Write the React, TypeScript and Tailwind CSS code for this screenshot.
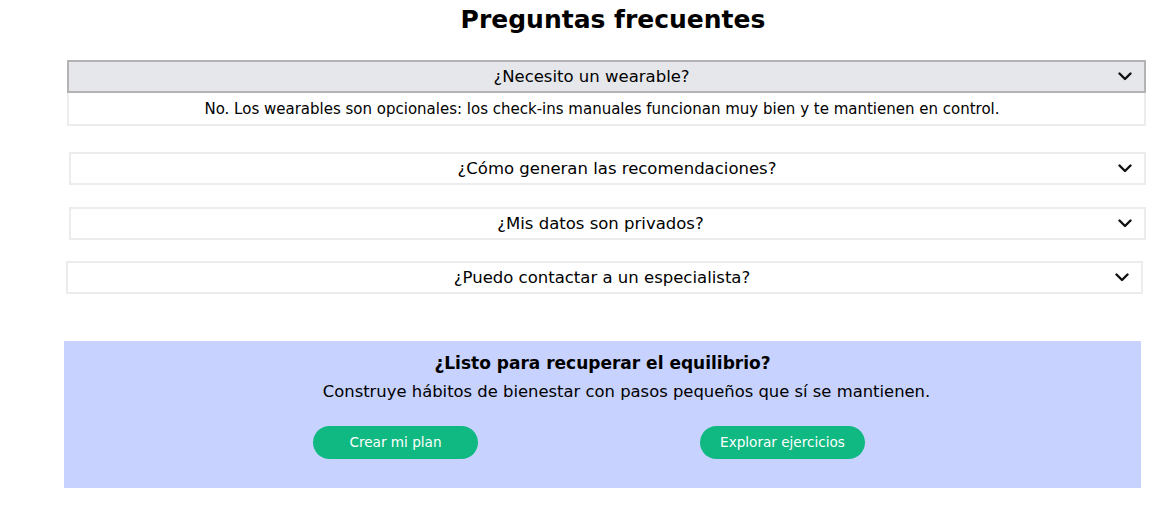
import React from "react";

const faqs = [
  {
    q: "¿Necesito un wearable?",
    a: "No. Los wearables son opcionales: los check-ins manuales funcionan muy bien y te mantienen en control.",
    open: true,
  },
  { q: "¿Cómo generan las recomendaciones?", a: "", open: false },
  { q: "¿Mis datos son privados?", a: "", open: false },
  { q: "¿Puedo contactar a un especialista?", a: "", open: false },
];

const itemSpacing = [
  "mt-[24px] ml-[67px] w-[1079px]",
  "mt-[26px] ml-[69px] w-[1077px]",
  "mt-[22px] ml-[69px] w-[1077px]",
  "mt-[21px] ml-[66px] w-[1077px]",
];

const textShift = ["pl-[4px]", "pl-[53px]", "pl-[20px]", "pl-[29px]"];

const Chevron: React.FC = () => (
  <svg width="14" height="9" viewBox="0 0 14 9" fill="none" className="shrink-0">
    <path d="M1.5 1.5l5.5 5.5 5.5-5.5" stroke="#111" strokeWidth="2.4" strokeLinecap="round" strokeLinejoin="round" />
  </svg>
);

const App: React.FC = () => {
  return (
    <div className="w-[1168px] h-[532px] bg-white text-black font-['DejaVu_Sans',sans-serif] overflow-hidden">
      <h1 className="pt-[3px] pl-[58px] text-center text-[25px] leading-[33px] font-bold">Preguntas frecuentes</h1>

      {faqs.map((f, i) => (
        <div key={f.q} className={itemSpacing[i]}>
          <div
            className={
              f.open
                ? "h-[33px] flex items-center pl-[14px] pr-[12px] bg-[#e5e7eb] border-2 border-[#b3b3b3]"
                : "h-[33px] flex items-center pl-[14px] pr-[12px] bg-white border-2 border-[#ececee]"
            }
          >
            <span className={"flex-1 text-center text-[16.5px] pt-[1px] " + textShift[i]}>{f.q}</span>
            <span className="ml-[22px]">
              <Chevron />
            </span>
          </div>
          {f.open && (
            <div className="h-[33px] flex items-center justify-center pt-[2px] pr-[9px] border-2 border-t-0 border-[#ececee] text-[15px]">
              {f.a}
            </div>
          )}
        </div>
      ))}

      <section className="mt-[47px] ml-[64px] w-[1077px] h-[147px] bg-[#c7d2fe] pt-[10px] text-center">
        <h2 className="text-[17px] leading-[24px] font-bold">¿Listo para recuperar el equilibrio?</h2>
        <p className="mt-[6px] text-[16.4px] leading-[22px] pl-[48px]">Construye hábitos de bienestar con pasos pequeños que sí se mantienen.</p>
        <div className="mt-[23px] w-[774px] ml-[138px] grid grid-cols-2">
          <div className="flex justify-center">
            <button className="w-[165px] h-[33px] rounded-full bg-[#10b981] text-white text-[13.6px]">Crear mi plan</button>
          </div>
          <div className="flex justify-center">
            <button className="w-[165px] h-[33px] rounded-full bg-[#10b981] text-white text-[13.6px]">Explorar ejercicios</button>
          </div>
        </div>
      </section>
    </div>
  );
};

export default App;
